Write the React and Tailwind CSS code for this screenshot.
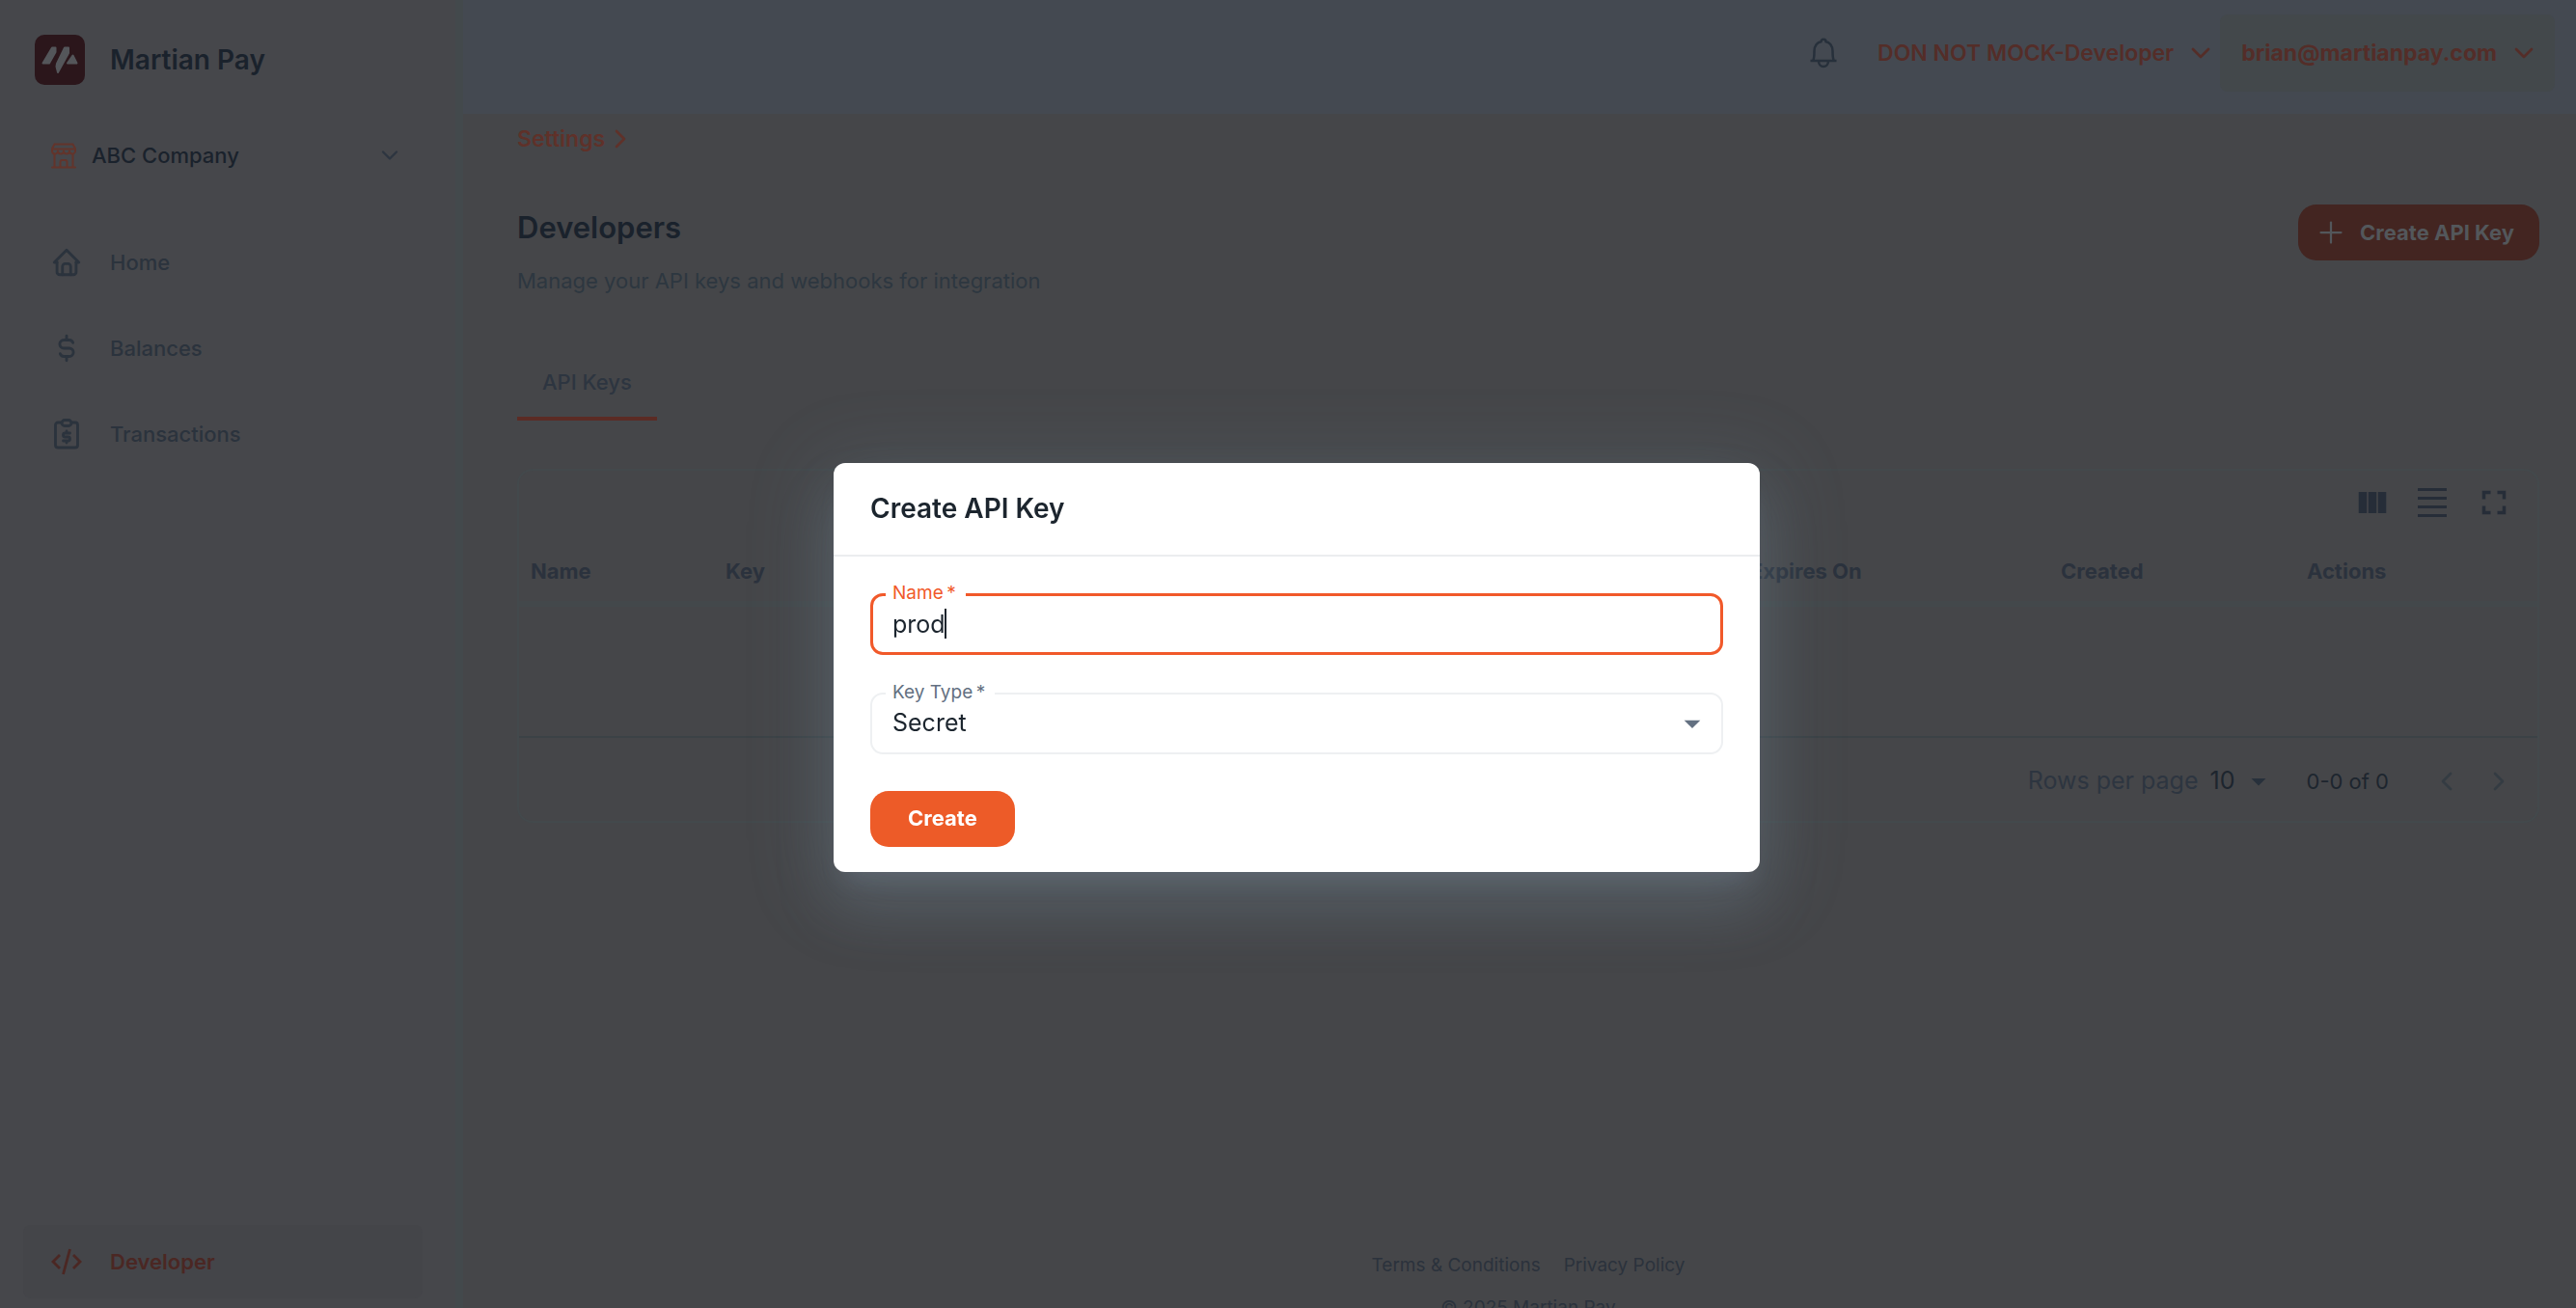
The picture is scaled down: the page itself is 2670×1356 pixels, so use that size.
import React, { useState } from 'react';
import { TbHome, TbCurrencyDollar, TbChevronDown, TbChevronRight, TbChevronLeft, TbPlus } from 'react-icons/tb';
import { MdViewColumn, MdFullscreen, MdArrowDropDown } from 'react-icons/md';

const Logo = () => (
    <svg viewBox="0 0 52 52" className="size-13 shrink-0" aria-hidden="true">
        <rect width="52" height="52" rx="10" fill="#2b161b" />
        <g fill="#54565a" stroke="#54565a" strokeWidth="2" strokeLinejoin="round">
            <path d="M8.500 29.500L18 13.500H21.500V18L15 29.500Z" />
            <path d="M23 30L31 13.500H35V19L24 39L22.500 33Z" />
            <path d="M34 29.500L39.500 21.500L43.500 29.500Z" />
        </g>
    </svg>
);

const StoreIcon = () => (
    <svg viewBox="0 0 26 27" className="h-[27px] w-[26px] shrink-0" fill="none" stroke="#63342b" strokeWidth="2" strokeLinecap="round" strokeLinejoin="round" aria-hidden="true">
        <path d="M3.500 1.500H22.500L25 6V8.500M1 8.500V6L3.500 1.500M1 6.500H25" />
        <path d="M1 8.500A3 3 0 0 0 7 8.500A3 3 0 0 0 13 8.500A3 3 0 0 0 19 8.500A3 3 0 0 0 25 8.500" />
        <path d="M3.500 12V25.500M22.500 12V25.500M1 25.500H25M9.500 25.500V20A2 2 0 0 1 11.500 18H14.500A2 2 0 0 1 16.500 20V25.500" />
    </svg>
);

const ClipboardIcon = () => (
    <svg viewBox="0 0 26 32" className="h-8 w-[26px]" fill="none" stroke="currentColor" strokeWidth="2.800" strokeLinecap="round" strokeLinejoin="round" aria-hidden="true">
        <path d="M8 4H4A2.500 2.500 0 0 0 1.500 6.500V27.500A2.500 2.500 0 0 0 4 30H22A2.500 2.500 0 0 0 24.500 27.500V6.500A2.500 2.500 0 0 0 22 4H18" />
        <rect x="8" y="1.500" width="10" height="6" rx="3" />
        <path d="M16.500 15H11.500A2 2 0 0 0 11.500 19H14.500A2 2 0 0 1 14.500 23H9.500M13 13V15M13 23V25" />
    </svg>
);

const CodeIcon = () => (
    <svg viewBox="0 0 32 28" className="h-7 w-8" fill="none" stroke="currentColor" strokeWidth="2.800" aria-hidden="true">
        <path d="M9 7L2 14L9 21M23 7L30 14L23 21M19.500 1L12.500 27" />
    </svg>
);

const BellIcon = () => (
    <svg viewBox="0 0 28 32" className="h-8 w-7" fill="none" stroke="currentColor" strokeWidth="2.500" strokeLinejoin="round" aria-hidden="true">
        <path d="M0.500 24H27.500M3 24C4.500 22 4.500 19 4.500 14C4.500 8 8 4.500 11.500 4.200C11.500 1 16.500 1 16.500 4.200C20 4.500 23.500 8 23.500 14C23.500 19 23.500 22 25 24" />
        <path d="M9 24.500A5 5.500 0 0 0 19 24.500" />
    </svg>
);

const navItems = [
    { label: 'Home', icon: <TbHome className="size-9" /> },
    { label: 'Balances', icon: <TbCurrencyDollar className="size-9" /> },
    { label: 'Transactions', icon: <ClipboardIcon /> },
];

const NavLink = ({ label, icon, active }) => (
    <a
        href="#"
        className={
            active
                ? 'flex h-19 items-center gap-7 rounded-lg bg-[#444549] px-7 text-[22px] font-semibold text-[#4b2723]'
                : 'flex h-19 items-center gap-7 rounded-lg px-7 text-[22px] font-medium text-[#2b333d]'
        }
    >
        <span className="flex w-[34px] justify-center">{icon}</span>
        {label}
    </a>
);

const Sidebar = () => (
    <aside className="flex w-[480px] shrink-0 flex-col border-r-8 border-[#43494c] bg-[#46474b] pt-9 pr-[34px] pb-[10px] pl-6">
        <div className="flex items-center gap-[26px] pl-3">
            <Logo />
            <span className="text-[28px] leading-13 font-semibold text-[#1a222c]">Martian Pay</span>
        </div>
        <button type="button" className="mt-9 flex h-[74px] items-center gap-4 pr-5 pl-[29px] text-[22px] font-medium text-[#1a222c]">
            <StoreIcon />
            <span>ABC Company</span>
            <TbChevronDown className="ml-auto size-7 text-[#2d3540]" />
        </button>
        <nav className="mt-9 flex flex-1 flex-col gap-[13px]">
            {navItems.map(item => (
                <NavLink key={item.label} label={item.label} icon={item.icon} />
            ))}
            <div className="mt-auto">
                <NavLink label="Developer" icon={<CodeIcon />} active />
            </div>
        </nav>
    </aside>
);

const TopBar = () => (
    <header className="flex h-[118px] shrink-0 items-start justify-end bg-[#444951] pt-[15px] pr-[22px] text-[23px] font-bold text-[#542d28]">
        <button type="button" aria-label="Notifications" className="mr-[42px] flex h-20 items-center text-[#27303b]">
            <BellIcon />
        </button>
        <button type="button" className="mr-1 flex h-20 items-center gap-3 font-semibold">
            DON NOT MOCK-Developer
            <TbChevronDown className="size-8" />
        </button>
        <button type="button" className="flex h-20 items-center gap-3 rounded-lg bg-[#43484b] pr-4 pl-[22px]">
            brian@martianpay.com
            <TbChevronDown className="size-8" />
        </button>
    </header>
);

const KeysTable = () => (
    <section className="mt-[50px] rounded-2xl border-2 border-[#43494c]">
        <div className="flex h-[74px] items-center justify-end gap-7 pr-6 pb-2 text-[#262d38]">
            <button type="button" aria-label="Show columns">
                <MdViewColumn className="size-[38px]" />
            </button>
            <button type="button" aria-label="Toggle density" className="flex w-[30px] flex-col gap-[6px]">
                <span className="h-[3px] bg-[#262d38]" />
                <span className="h-[3px] bg-[#262d38]" />
                <span className="h-[3px] bg-[#262d38]" />
                <span className="h-[3px] bg-[#262d38]" />
            </button>
            <button type="button" aria-label="Full screen">
                <MdFullscreen className="size-[42px]" />
            </button>
        </div>
        <table className="w-full table-fixed text-left text-[22px] text-[#2b323d]">
            <thead>
                <tr className="h-16 border-b-6 border-[#43484b]">
                    <th className="w-[202px] px-3 font-bold">Name</th>
                    <th className="px-3 font-bold">Key</th>
                    <th className="w-[322px] px-3 font-bold">Expires On</th>
                    <th className="w-[255px] px-3 font-bold">Created</th>
                    <th className="w-[251px] px-3 font-bold">Actions</th>
                </tr>
            </thead>
            <tbody>
                <tr className="h-[138px] border-b-2 border-[#3b4246]">
                    <td colSpan={5} />
                </tr>
            </tbody>
        </table>
        <div className="flex h-[86px] items-center justify-end pt-1 pr-6 text-[#1d252e]">
            <label htmlFor="rows" className="mr-3 text-[25px] text-[#2d3540]">Rows per page</label>
            <div className="relative mr-8 flex items-center">
                <select id="rows" className="w-[68px] appearance-none text-[25px]">
                    <option>10</option>
                </select>
                <MdArrowDropDown className="pointer-events-none absolute right-0 size-9 text-[#27303b]" />
            </div>
            <span className="mr-11 text-[22px]">0-0 of 0</span>
            <button type="button" aria-label="Previous page" className="mr-[22px] text-[#343b42]">
                <TbChevronLeft className="size-8" />
            </button>
            <button type="button" aria-label="Next page" className="text-[#343b42]">
                <TbChevronRight className="size-8" />
            </button>
        </div>
    </section>
);

const CreateKeyDialog = () => {
    const [name, setName] = useState('prod');

    return (
        <div className="fixed inset-0 flex items-center justify-center pl-[18px]">
            <div
                role="dialog"
                aria-labelledby="dialog-title"
                className="mt-[27px] w-[960px] rounded-xl bg-white text-[#1c252e] shadow-[0_18px_24px_-11px_rgba(140,156,180,0.2),0_38px_61px_5px_rgba(136,158,176,0.14),0_14px_80px_16px_rgba(130,160,172,0.16)]"
            >
                <h2 id="dialog-title" className="flex h-[97px] items-center border-b-2 border-[#ebedef] px-[38px] text-[28px] font-semibold">
                    Create API Key
                </h2>
                <form className="px-[38px] pt-[38px] pb-[26px]" onSubmit={e => e.preventDefault()}>
                    <div className="relative">
                        <label htmlFor="key-name" className="absolute -top-3 left-4 bg-white pr-[10px] pl-[7px] text-[19px] leading-6 text-[#f1592a]">
                            Name{'\u2009'}*
                        </label>
                        <input
                            id="key-name"
                            value={name}
                            onChange={e => setName(e.target.value)}
                            className="h-16 w-full rounded-[13px] border-3 border-[#f1592a] px-5 text-[25px] caret-transparent outline-none"
                        />
                        {/* text cursor, kept at the end of the typed name */}
                        <div aria-hidden="true" className="pointer-events-none absolute inset-y-0 left-[22px] flex items-center text-[25px]">
                            <span className="invisible whitespace-pre">{name}</span>
                            <span className="h-[31px] w-[2px] bg-[#1c252e]" />
                        </div>
                    </div>
                    <div className="relative mt-[39px]">
                        <label htmlFor="key-type" className="absolute -top-3 left-4 bg-white pr-[10px] pl-[7px] text-[19px] leading-6 text-[#637081]">
                            Key Type{'\u2009'}*
                        </label>
                        <select id="key-type" className="h-16 w-full appearance-none rounded-[13px] border-2 border-[#eef0f2] px-[21px] text-[25px]">
                            <option>Secret</option>
                        </select>
                        <MdArrowDropDown className="pointer-events-none absolute top-3 right-3 size-10 text-[#637081]" />
                    </div>
                    <button type="submit" className="mt-[38px] h-[58px] rounded-[19px] bg-[#ed5b28] px-[39px] text-[22px] font-bold text-white">
                        Create
                    </button>
                </form>
            </div>
        </div>
    );
};

export default function App() {
    return (
        <div className="flex h-screen overflow-hidden bg-[#454649] font-['Inter',sans-serif]">
            <Sidebar />
            <div className="flex min-w-0 flex-1 flex-col">
                <TopBar />
                <main className="flex-1 overflow-hidden pt-[10px] pr-[38px] pl-14">
                    <a href="#" className="flex h-8 items-center text-[23px] font-semibold text-[#5f3129]">
                        Settings
                        <TbChevronRight className="size-8" />
                    </a>
                    <div className="mt-[52px] flex items-start justify-between">
                        <div>
                            <h1 className="text-[31px] leading-12 font-semibold text-[#1a222c]">Developers</h1>
                            <p className="mt-[15px] text-[22px] leading-8 text-[#2d3740]">Manage your API keys and webhooks for integration</p>
                        </div>
                        <button type="button" className="flex h-[58px] items-center gap-3 rounded-[19px] bg-[#432521] pr-[26px] pl-4 text-[22px] font-bold text-[#53575b]">
                            <TbPlus className="size-9" strokeWidth={1.5} />
                            Create API Key
                        </button>
                    </div>
                    <div role="tablist" className="mt-[54px] flex">
                        <button type="button" role="tab" aria-selected="true" className="h-[75px] border-b-4 border-[#5b2b24] px-[26px] text-[22px] font-medium text-[#2d3540]">
                            API Keys
                        </button>
                    </div>
                    <KeysTable />
                    <footer className="mt-[441px] text-center text-[19px] leading-9 text-[#2b323c]">
                        <div className="flex justify-center gap-6">
                            <a href="#">Terms &amp; Conditions</a>
                            <a href="#">Privacy Policy</a>
                        </div>
                        <p className="mt-2">© 2025 Martian Pay</p>
                    </footer>
                </main>
            </div>
            <CreateKeyDialog />
        </div>
    );
}
